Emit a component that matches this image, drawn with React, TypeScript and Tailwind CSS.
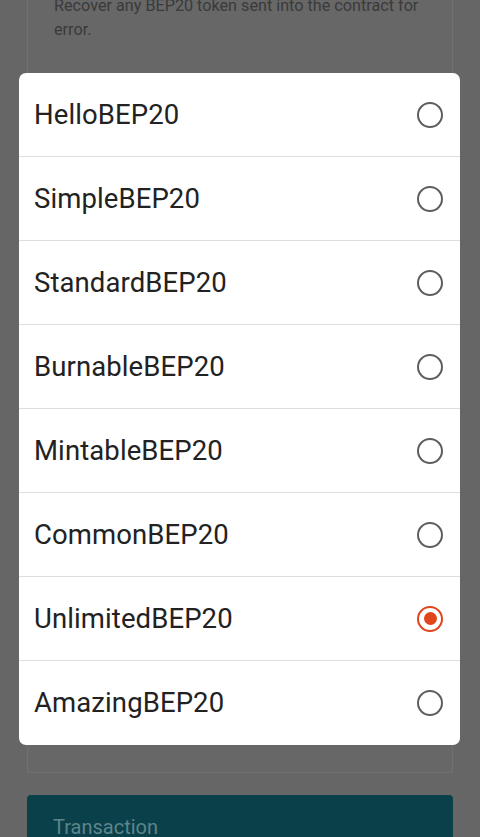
import React, { useState } from 'react';

const options = [
  'HelloBEP20',
  'SimpleBEP20',
  'StandardBEP20',
  'BurnableBEP20',
  'MintableBEP20',
  'CommonBEP20',
  'UnlimitedBEP20',
  'AmazingBEP20',
];

export default function App() {
  const [selected, setSelected] = useState('UnlimitedBEP20');

  return (
    <div className="relative h-[837px] w-[480px] overflow-hidden bg-[#666666] font-['Roboto',sans-serif]">
      {/* Dimmed page underneath */}
      <div className="flex flex-col px-[27px]">
        <div className="-mt-[20px] h-[793px] border-x border-b border-[#707070] bg-[#676767] px-[26px] pt-[14px]">
          <p className="text-[16.2px] leading-[24px] text-[#3a3a3a]">
            Recover any BEP20 token sent into the contract for error.
          </p>
        </div>
        <div className="mt-[22px] h-[60px] rounded-t-[4px] bg-[#0a404a] px-[26px] pt-[17px]">
          <span className="text-[20px] text-[#5e858b]">Transaction</span>
        </div>
      </div>

      {/* Dialog */}
      <div className="absolute left-[19px] top-[73px] w-[441px] overflow-hidden rounded-[7px] bg-white">
        {options.map((name, i) => {
          const checked = name === selected;
          return (
            <button
              key={name}
              onClick={() => setSelected(name)}
              className={`flex h-[84px] w-full items-center justify-between pl-[15px] pr-[17px] text-left ${
                i < options.length - 1 ? 'border-b border-[#dedede]' : ''
              }`}
            >
              <span className="text-[27.5px] tracking-[0.1px] text-[#222222]">{name}</span>
              {checked ? (
                <span className="flex h-[26px] w-[26px] items-center justify-center rounded-full border-[2.5px] border-[#e0451c]">
                  <span className="h-[13px] w-[13px] rounded-full bg-[#e0451c]" />
                </span>
              ) : (
                <span className="h-[26px] w-[26px] rounded-full border-[2.5px] border-[#5e5e5e]" />
              )}
            </button>
          );
        })}
      </div>
    </div>
  );
}
